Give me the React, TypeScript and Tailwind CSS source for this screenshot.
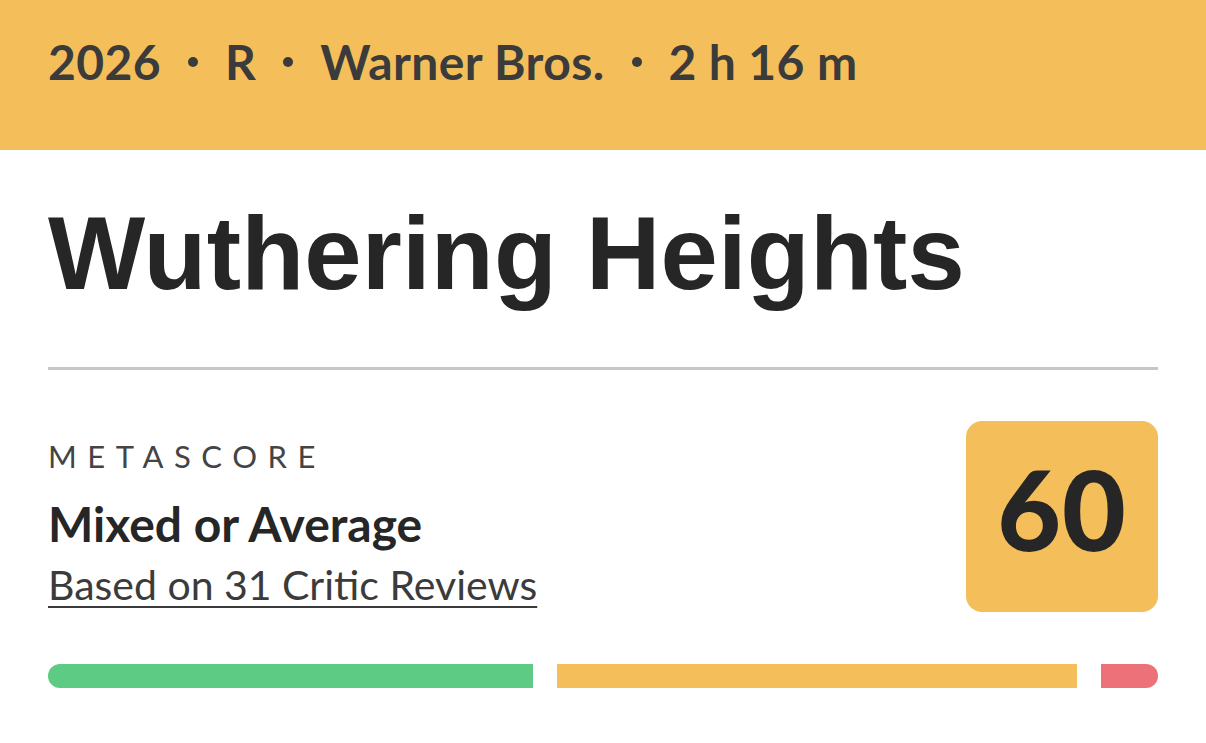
export default function App() {
  return (
    <div className="min-h-screen w-full bg-white font-['Lato',sans-serif]">
      {/* Meta strip */}
      <header className="flex h-[150px] items-center bg-[#f4bf5b] px-12 pb-[26px]">
        <p className="flex items-center gap-[27px] text-[48px] font-bold leading-none tracking-[0.4px] text-[#3b3b3b]">
          <span>2026</span>
          <Dot />
          <span>R</span>
          <Dot />
          <span>Warner Bros.</span>
          <Dot />
          <span>2 h 16 m</span>
        </p>
      </header>

      <main className="px-12">
        <h1 className="pt-[52px] font-['Liberation_Sans',Arial,sans-serif] text-[103px] font-bold leading-none tracking-[0.2px] text-[#262626]">
          Wuthering Heights
        </h1>

        <hr className="mt-[62px] border-t-[3px] border-[#c6c6c6]" />

        <section className="mt-[51px] flex items-start justify-between">
          <div className="pt-[20px]">
            <p className="text-[31px] leading-none tracking-[0.34em] text-[#444]">METASCORE</p>
            <p className="mt-[28px] text-[48px] font-bold leading-none text-[#262626]">Mixed or Average</p>
            <a href="#" className="mt-[16px] block text-[41px] leading-none text-[#3b3b3b] underline decoration-2 underline-offset-[6px]">
              Based on 31 Critic Reviews
            </a>
          </div>
          <div className="flex h-[191px] w-[192px] items-center justify-center rounded-2xl bg-[#f4bf5b] pb-[18px]">
            <span className="text-[110px] font-black leading-none tracking-[1px] text-[#262626]">60</span>
          </div>
        </section>

        <div className="mt-[52px] flex h-6 gap-6">
          <div className="w-[485px] rounded-l-full bg-[#5ecb84]" />
          <div className="w-[520px] bg-[#f4bf5b]" />
          <div className="flex-1 rounded-r-full bg-[#ec7178]" />
        </div>
      </main>
    </div>
  );
}

function Dot() {
  return <span className="inline-block h-[10px] w-[10px] rounded-full bg-[#3b3b3b]" />;
}
